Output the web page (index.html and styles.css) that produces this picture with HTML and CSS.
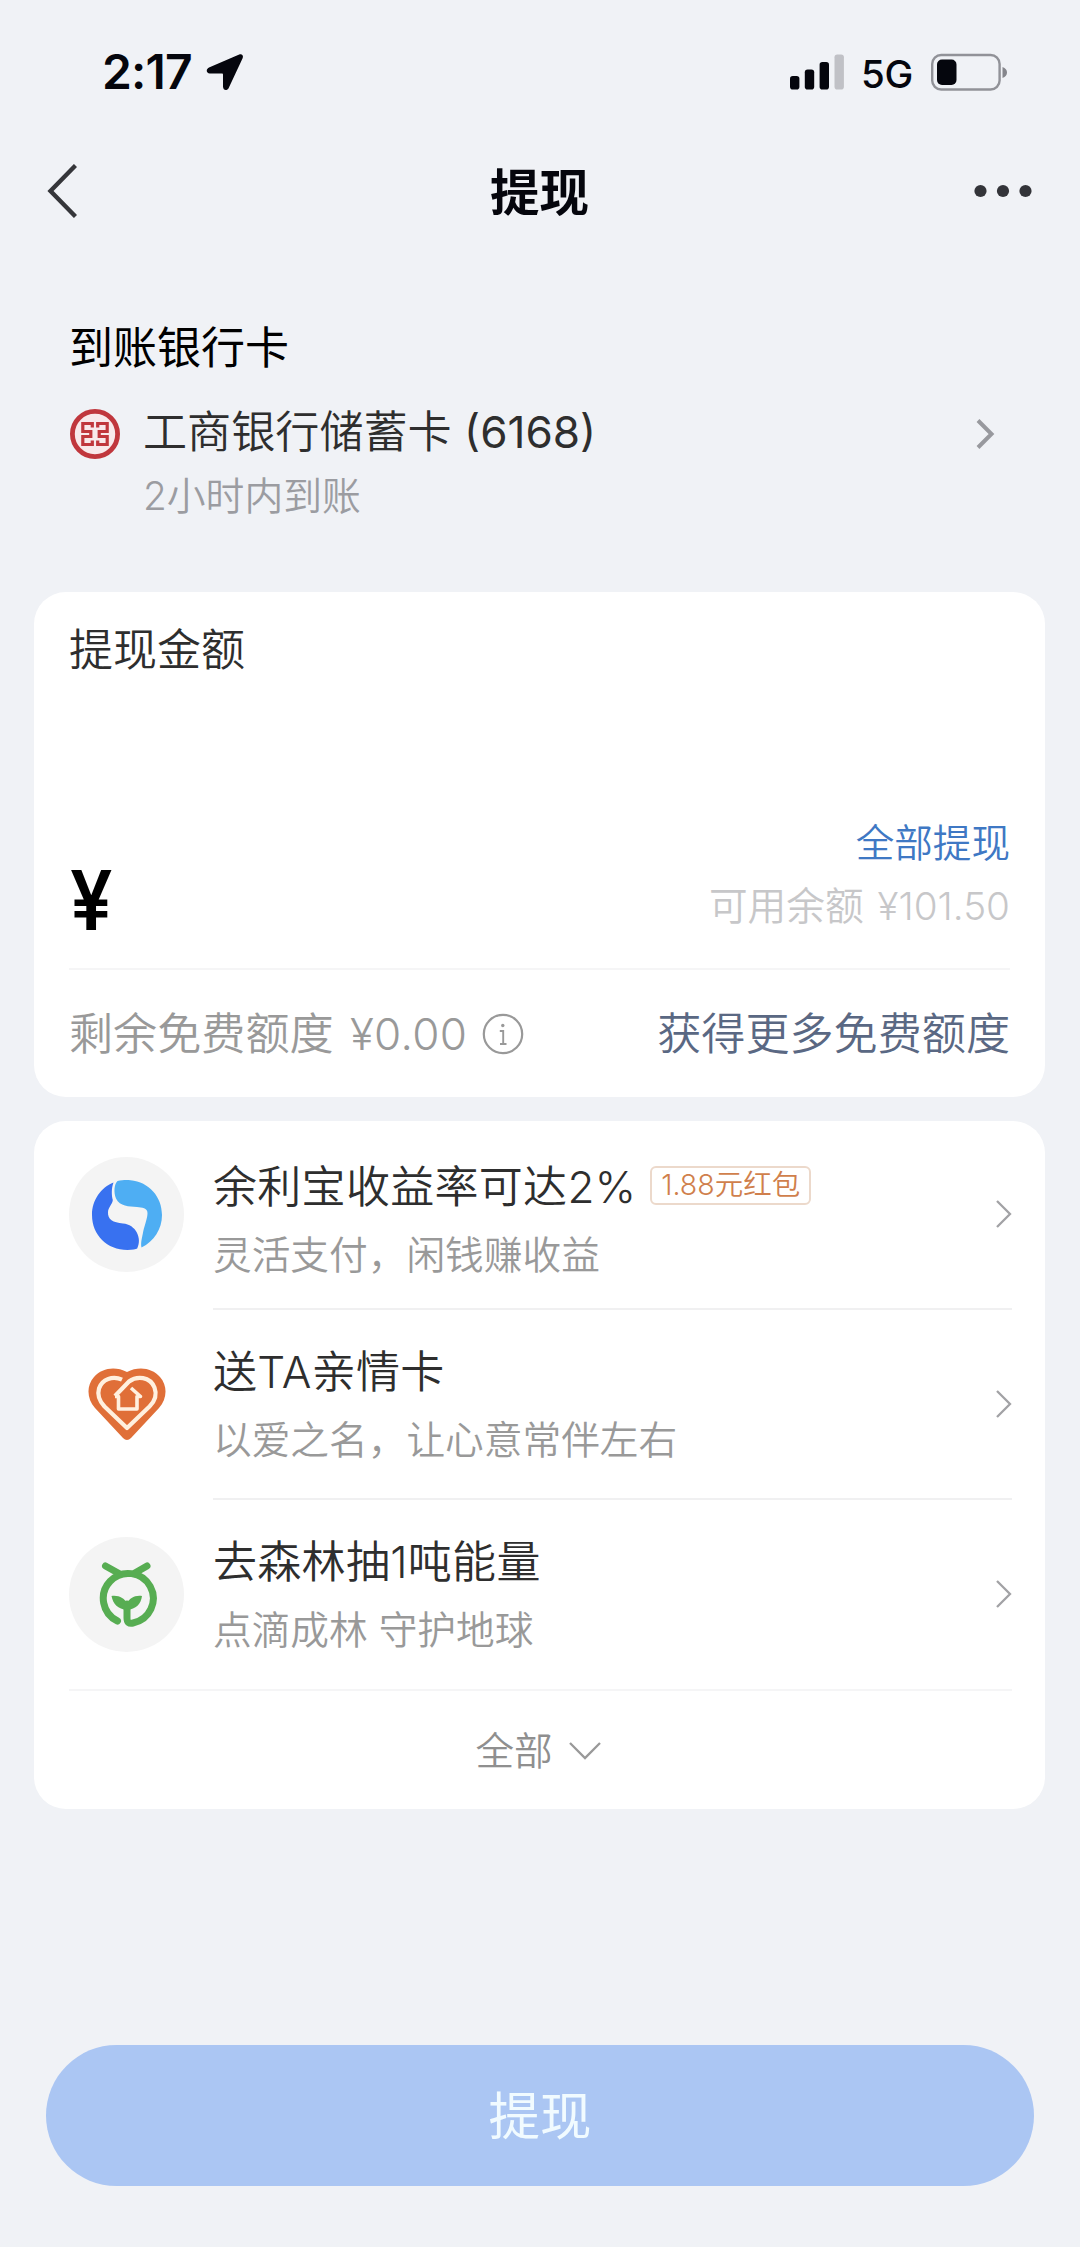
FILE: index.html
```html
<!DOCTYPE html>
<html lang="zh-CN">
<head>
<meta charset="utf-8">
<title>提现</title>
<link rel="stylesheet" href="styles.css">
</head>
<body>
<div class="app">
  <header class="status">
    <div class="status-left">
      <span class="time">2:17</span>
      <svg class="location" width="38" height="38" viewBox="0 0 38 38"><path d="M33.2 1.6 3 14.600C-.3 16.200.1 20.400 3.800 20.500H16.200Q17 20.500 17 21.400V33.600C17.100 37.800 21.200 38.200 22.700 35L36.600 5.200C37.700 2.500 36 .5 33.200 1.600Z" fill="#05060d"/></svg>
    </div>
    <div class="status-right">
      <svg width="54" height="36" viewBox="0 0 54 36"><g fill="#05060d"><rect x="0" y="22" width="9.400" height="13.500" rx="2.800"/><rect x="14.800" y="15.500" width="9.400" height="20" rx="2.800"/><rect x="29.600" y="8" width="9.400" height="27.500" rx="2.800"/></g><rect x="44.500" y="0.500" width="9.400" height="35" rx="2.800" fill="#c0c1c6"/></svg>
      <span class="network">5G</span>
      <svg width="77" height="38" viewBox="0 0 77 38"><rect x="1.200" y="2" width="67.400" height="34.500" rx="9" fill="none" stroke="#919298" stroke-width="2.400"/><rect x="6" y="6.500" width="19.500" height="25.500" rx="5" fill="#05060d"/><path d="M71.500 14q4.500 1.800 4.500 5.500t-4.500 5.500Z" fill="#85868c"/></svg>
    </div>
  </header>

  <nav class="nav">
    <svg width="30" height="54" viewBox="0 0 30 54"><path d="M28.500 1.500 3.500 27l25 25.500" fill="none" stroke="#35363a" stroke-width="4.400"/></svg>
    <h1 class="nav-title">提现</h1>
    <svg width="58" height="14" viewBox="0 0 58 14"><g fill="#333439"><circle cx="6.500" cy="7" r="6.100"/><circle cx="29" cy="7" r="6.100"/><circle cx="51.500" cy="7" r="6.100"/></g></svg>
  </nav>

  <section class="bank">
    <h2 class="bank-heading">到账银行卡</h2>
    <div class="bank-row">
      <svg class="bank-logo" width="52" height="52" viewBox="0 0 52 52"><circle cx="26" cy="26" r="22.600" fill="#f8e9eb" stroke="#c0373d" stroke-width="4.800"/><path d="M23.300 19.500V15.500H13.800v8h8v5h-8v8h9.500v-4M28.700 19.500V15.500h9.500v8h-8v5h8v8h-9.500v-4" fill="none" stroke="#c0373d" stroke-width="3.200"/></svg>
      <div class="bank-info">
        <div class="bank-name">工商银行储蓄卡 <span class="card-no">(6168)</span></div>
        <div class="bank-note">2小时内到账</div>
      </div>
      <svg class="bank-arrow" width="20" height="32" viewBox="0 0 20 32"><path d="M3 2.500 16.500 16 3 29.500" fill="none" stroke="#98999e" stroke-width="4"/></svg>
    </div>
  </section>

  <section class="card amount">
    <div class="amount-label">提现金额</div>
    <div class="amount-row">
      <span class="yen">¥</span>
      <div class="amount-side">
        <span class="withdraw-all">全部提现</span>
        <span class="balance">可用余额 <span class="num">¥101.50</span></span>
      </div>
    </div>
    <div class="quota">
      <span class="quota-left">剩余免费额度 <span class="num">¥0.00</span></span>
      <svg class="info" width="42" height="42" viewBox="0 0 42 42"><circle cx="21" cy="21" r="19.200" fill="none" stroke="#999" stroke-width="2.200"/><circle cx="20.800" cy="12.500" r="1.700" fill="#999"/><path d="M17.800 18h3.400v13M18 31h6.500" fill="none" stroke="#999" stroke-width="1.900"/></svg>
      <span class="quota-more">获得更多免费额度</span>
    </div>
  </section>

  <section class="card services">
    <div class="service first">
      <div class="service-icon filled">
        <svg width="72" height="72" viewBox="0 0 72 72"><path d="M22.500 3.500C10 8.500 1 21 1 36c0 20 15 35 35.500 35 5 0 8.500-1 9.700-1.500 5.300-10-1.400-24.200-14.200-25C22 43.500 16.500 40.500 17 33c.3-4.500 4.500-8 4.800-12C20.500 16.500 20.300 9 22.500 3.500Z" fill="#3871f0"/><path d="M26.500 2C32 .8 36 1 39.500 1.200 58 3 71 17.500 71 36c0 14-8 26.500-20.500 32.500-1-5 .5-9 1.700-16C54 45 56.500 39 56.500 34 56.500 29 51 28.500 46 28c-8-.5-17-.5-21-8.500-2.500-6-2-14 1.500-17.500Z" fill="#4eaef3"/></svg>
      </div>
      <div class="service-main">
        <div class="service-text">
          <div class="service-title">余利宝收益率可达2%<span class="tag">1.88元红包</span></div>
          <div class="service-desc">灵活支付，闲钱赚收益</div>
        </div>
        <svg width="17" height="30" viewBox="0 0 17 30"><path d="M2 2l13 13L2 28" fill="none" stroke="#a2a2a5" stroke-width="2.300"/></svg>
      </div>
    </div>
    <div class="service">
      <div class="service-icon">
        <svg width="78" height="76" viewBox="0 0 78 76"><path d="M39 5C27-1 14 1 6 10-2 19-1 32 7 41l28 30q4 4 8 0L71 41c8-9 9-22 1-31C64 1 51-1 39 5Z" fill="#e06f38"/><path d="M34 12.700C25 8.500 14 12 11 21.500c-2.200 7.500 1 13.200 5.500 18L39 61l22.500-21.500c5-5 8-11 5-19C62 9.500 49 8.500 41 14.500L27 29" fill="none" stroke="#fff0df" stroke-width="4.200" stroke-linejoin="round"/><path d="M27 29.500h3.500V42h18.500V29.500h3.500L43 21" fill="none" stroke="#fff0df" stroke-width="3.600" stroke-linejoin="round"/></svg>
      </div>
      <div class="service-main">
        <div class="service-text">
          <div class="service-title">送TA亲情卡</div>
          <div class="service-desc">以爱之名，让心意常伴左右</div>
        </div>
        <svg width="17" height="30" viewBox="0 0 17 30"><path d="M2 2l13 13L2 28" fill="none" stroke="#a2a2a5" stroke-width="2.300"/></svg>
      </div>
    </div>
    <div class="service last">
      <div class="service-icon filled">
        <svg width="60" height="68" viewBox="0 0 60 68"><path d="M20.500 60A25 25 0 1 1 36 62Q30 63.500 30 57V43M8.500 5 22 12.500M50 5 37 12.500" fill="none" stroke="#57ad52" stroke-width="7" stroke-linecap="round" stroke-linejoin="round"/><path d="M30 49C21 48 16 43 14.500 35c7-1 13.500 2 15.500 8 2-6 8-9 15-8-1 8-6 13-15 14Z" fill="#57ad52"/></svg>
      </div>
      <div class="service-main">
        <div class="service-text">
          <div class="service-title">去森林抽1吨能量</div>
          <div class="service-desc">点滴成林 守护地球</div>
        </div>
        <svg width="17" height="30" viewBox="0 0 17 30"><path d="M2 2l13 13L2 28" fill="none" stroke="#a2a2a5" stroke-width="2.300"/></svg>
      </div>
    </div>
    <div class="more">
      <span>全部</span>
      <svg width="32" height="20" viewBox="0 0 32 20"><path d="M1 2l15 15L31 2" fill="none" stroke="#999" stroke-width="2.300"/></svg>
    </div>
  </section>

  <button class="submit">提现</button>
</div>
</body>
</html>
```
FILE: styles.css
```css
* { box-sizing: border-box; margin: 0; padding: 0; }

body {
  background: #f0f2f6;
  font-family: "Inter", "Noto Sans CJK SC", sans-serif;
  font-weight: 350;
  color: #2e2e2e;
}

svg { display: block; flex: none; }

.app {
  width: 1080px;
  height: 2247px;
  display: flex;
  flex-direction: column;
}

/* Status bar */
.status {
  height: 143px;
  padding: 0 72px 0 102px;
  display: flex;
  justify-content: space-between;
  align-items: center;
  color: #05060d;
}
.status-left, .status-right { display: flex; align-items: center; }
.status-left { gap: 14px; }
.time { font-size: 48px; font-weight: 600; line-height: 60px; letter-spacing: -0.8px; }
.network { font-size: 38.5px; font-weight: 450; line-height: 50px; margin: 4px 18px 0 17px; letter-spacing: -0.3px; }

/* Navigation */
.nav {
  height: 96px;
  padding: 0 48px 0 47px;
  display: grid;
  grid-template-columns: 100px 1fr 100px;
  align-items: center;
}
.nav-title {
  text-align: center;
  font-size: 49.5px;
  line-height: 70px;
  padding-top: 3px;
  font-weight: 700;
  color: #05060d;
}
.nav svg:last-child { justify-self: end; }

/* Receiving bank */
.bank { height: 353px; padding: 79px 85px 0 69px; }
.bank-heading { font-size: 44px; line-height: 60px; font-weight: 400; color: #000; }
.bank-row { display: flex; align-items: flex-start; margin-top: 24px; }
.bank-logo { margin-top: 6px; }
.bank-info { flex: 1; margin-left: 22px; }
.bank-name { font-size: 44.1px; line-height: 60px; }
.card-no { font-weight: 400; }
.bank-note { font-size: 38.8px; line-height: 50px; margin-top: 9px; color: #9b9ca1; }
.bank-arrow { margin-top: 16px; }

/* Cards */
.card { margin: 0 35px 0 34px; background: #fff; border-radius: 32px; }
.amount { height: 505px; padding: 28px 35px 0 35px; }
.amount-label { font-size: 44px; line-height: 60px; }
.amount-row {
  height: 290px;
  display: flex;
  justify-content: space-between;
  align-items: flex-end;
  border-bottom: 2px solid #f5f5f6;
}
.yen {
  font-size: 82px;
  line-height: 90px;
  font-weight: 600;
  color: #000;
  margin: 0 0 22px 1px;
  transform: scaleX(0.92);
  transform-origin: left;
}
.amount-side { display: flex; flex-direction: column; align-items: flex-end; margin-bottom: 36px; }
.withdraw-all { font-size: 38.6px; line-height: 52px; color: #3f78c4; margin-bottom: 11px; }
.balance { font-size: 38.7px; line-height: 52px; color: #c7c7c9; }
.balance .num { margin-left: 3px; }
.quota { height: 128px; display: flex; align-items: center; font-size: 44.1px; line-height: 60px; }
.quota-left { color: #999; }
.quota-left .num { margin-left: 4px; letter-spacing: 0.3px; }
.info { margin-left: 15px; }
.quota-more { margin-left: auto; color: #5a6883; }

/* Services */
.services { height: 688px; margin-top: 24px; padding: 0 33px 0 35px; }
.service { height: 190px; display: flex; }
.service.first { height: 189px; }
.service-icon {
  width: 115px;
  height: 115px;
  margin: 37px 29px 0 0;
  border-radius: 50%;
  flex: none;
  display: flex;
  align-items: center;
  justify-content: center;
}
.service.first .service-icon { margin-top: 36px; }
.service-icon.filled { background: #f4f4f4; }
.service-main {
  flex: 1;
  display: flex;
  justify-content: space-between;
  align-items: center;
  border-bottom: 2px solid #f0f0f1;
}
.service-main svg { margin-top: -1px; }
.service-text { margin-top: -1px; }
.service.first .service-text { margin-top: 8px; }
.service-title { display: flex; align-items: center; font-size: 44px; line-height: 60px; letter-spacing: 0.3px; }
.service-desc { font-size: 38.7px; line-height: 52px; margin-top: 12px; color: #999; }
.service.last { height: 191px; border-bottom: 2px solid #f5f5f6; }
.service.last .service-main { border-bottom: 0; }
.tag {
  width: 161px;
  height: 39px;
  margin: -3px 0 0 14px;
  border: 2px solid #ecd9cb;
  border-radius: 6px;
  display: flex;
  align-items: center;
  justify-content: center;
  font-size: 28.5px;
  line-height: 36px;
  letter-spacing: 0;
  color: #d07f4c;
}
.more {
  height: 118px;
  display: flex;
  justify-content: center;
  align-items: center;
  gap: 16px;
  padding: 2px 5px 0 0;
  font-size: 38.6px;
  line-height: 52px;
  color: #8f8f8f;
}

/* Primary action */
.submit {
  margin: 236px 46px 0;
  height: 141px;
  border: 0;
  border-radius: 71px;
  background: #abc6f3;
  color: #f1fbff;
  font: 400 51.5px/70px "Inter", "Noto Sans CJK SC", sans-serif;
}
```
